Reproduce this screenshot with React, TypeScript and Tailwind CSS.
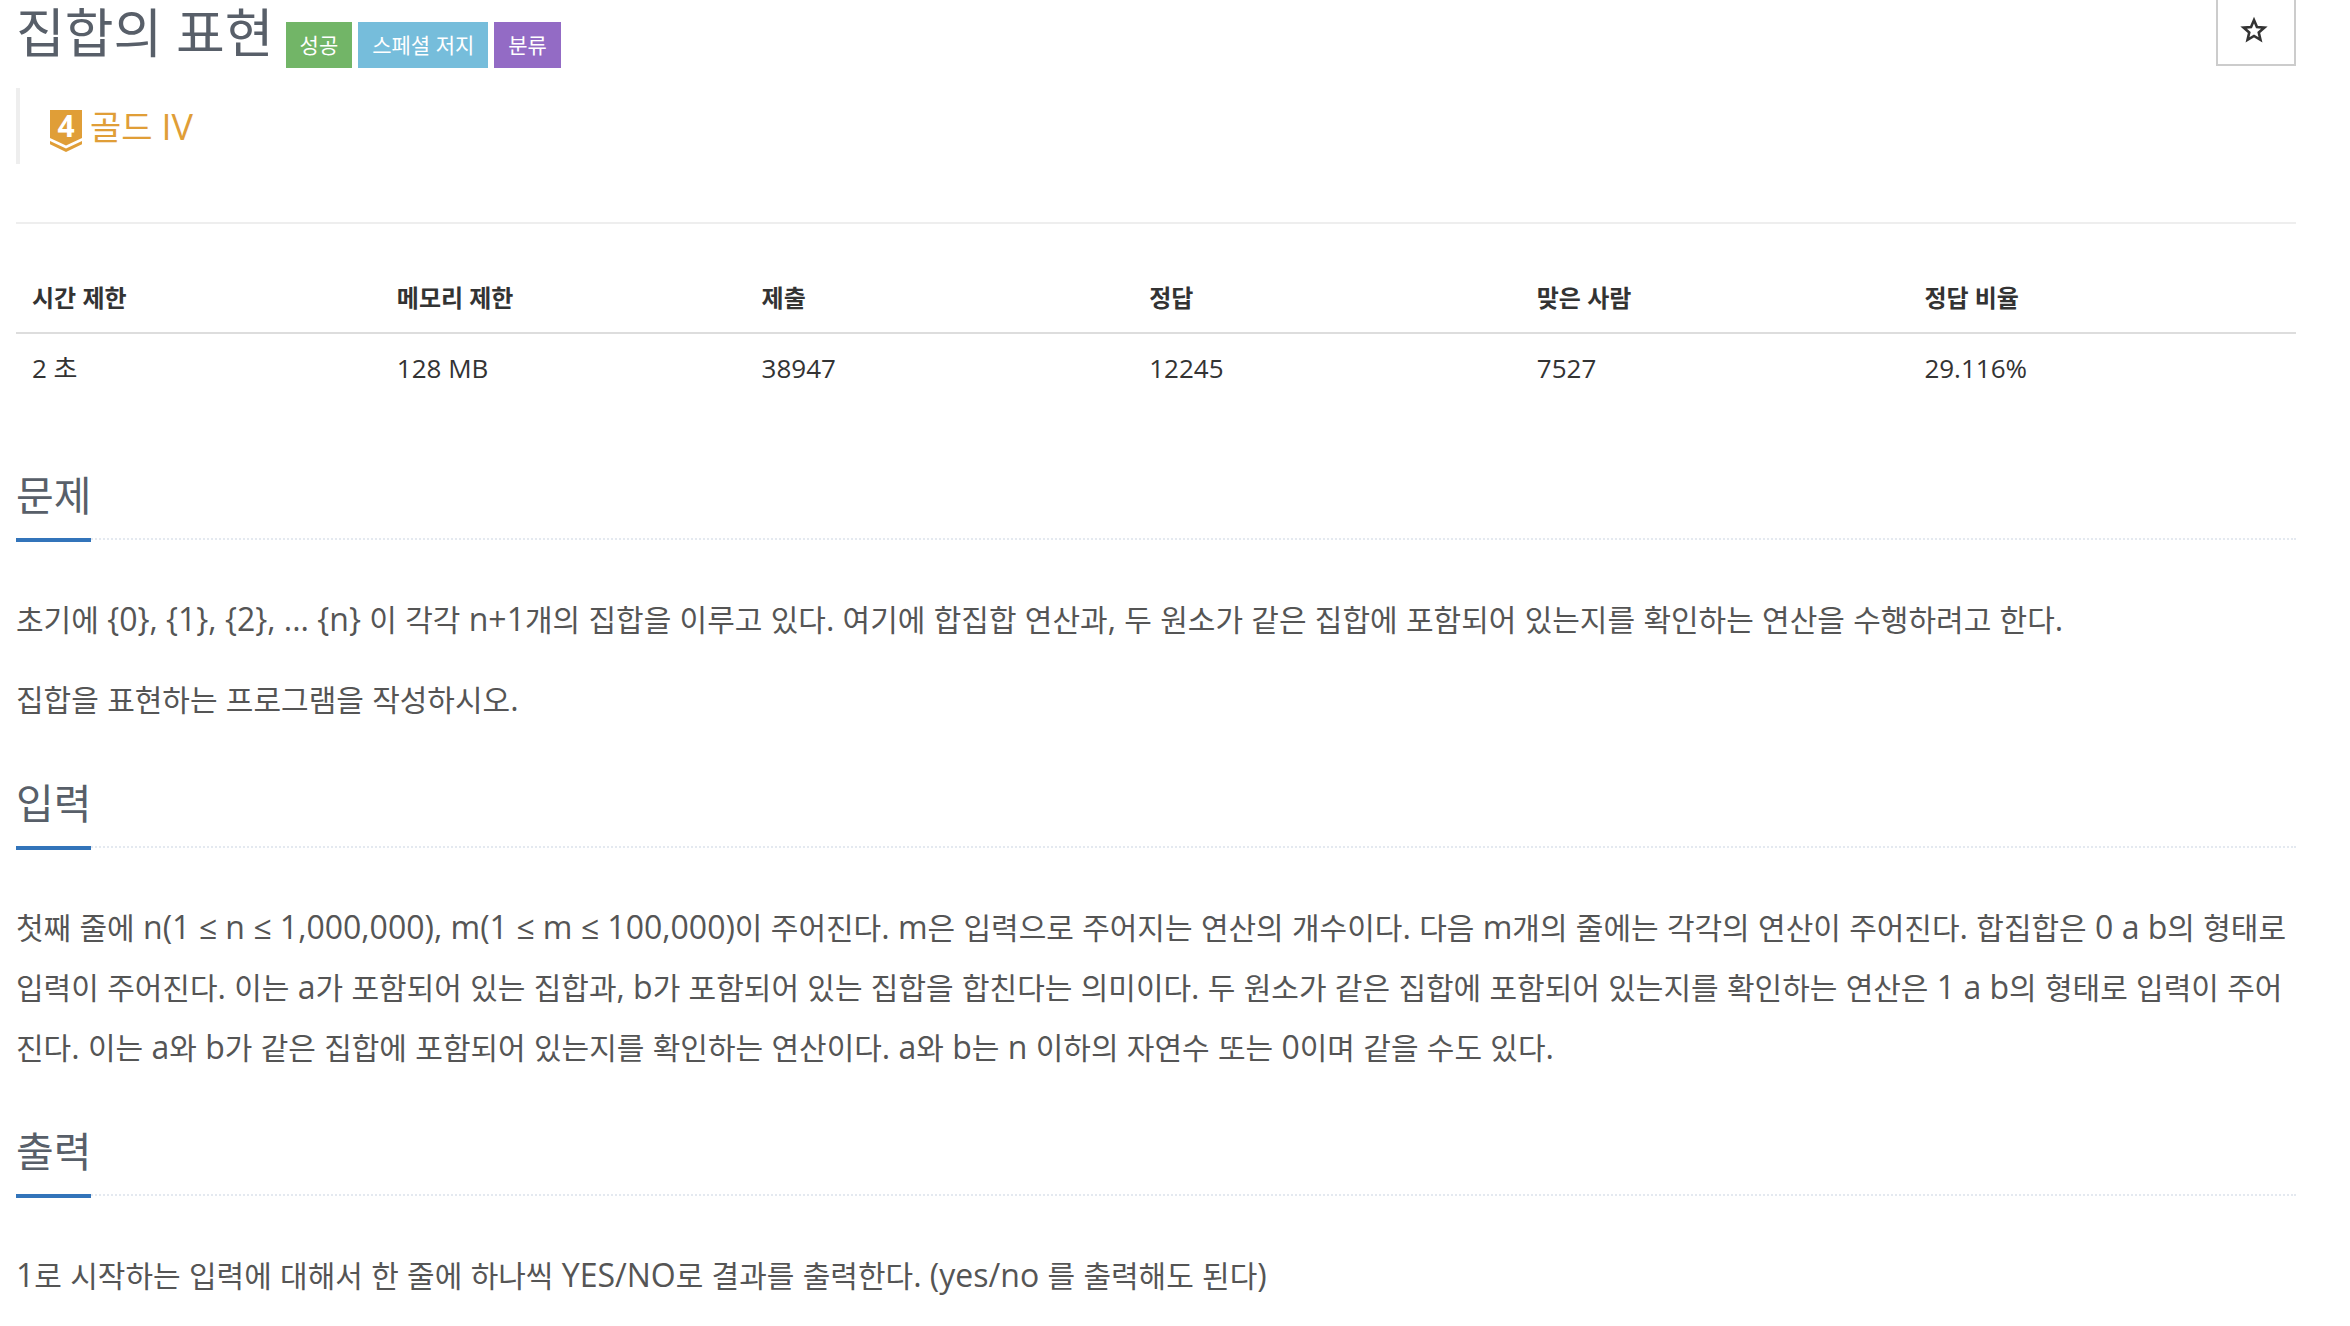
import type { ReactNode } from "react";

const stats = [
  { label: "시간 제한", value: "2 초", width: "w-[16%]" },
  { label: "메모리 제한", value: "128 MB", width: "w-[16%]" },
  { label: "제출", value: "38947", width: "w-[17%]" },
  { label: "정답", value: "12245", width: "w-[17%]" },
  { label: "맞은 사람", value: "7527", width: "w-[17%]" },
  { label: "정답 비율", value: "29.116%", width: "w-[17%]" },
];

const sections = [
  {
    title: "문제",
    paragraphs: [
      "초기에 {0}, {1}, {2}, ... {n} 이 각각 n+1개의 집합을 이루고 있다. 여기에 합집합 연산과, 두 원소가 같은 집합에 포함되어 있는지를 확인하는 연산을 수행하려고 한다.",
      "집합을 표현하는 프로그램을 작성하시오.",
    ],
  },
  {
    title: "입력",
    paragraphs: [
      "첫째 줄에 n(1 ≤ n ≤ 1,000,000), m(1 ≤ m ≤ 100,000)이 주어진다. m은 입력으로 주어지는 연산의 개수이다. 다음 m개의 줄에는 각각의 연산이 주어진다. 합집합은 0 a b의 형태로 입력이 주어진다. 이는 a가 포함되어 있는 집합과, b가 포함되어 있는 집합을 합친다는 의미이다. 두 원소가 같은 집합에 포함되어 있는지를 확인하는 연산은 1 a b의 형태로 입력이 주어진다. 이는 a와 b가 같은 집합에 포함되어 있는지를 확인하는 연산이다. a와 b는 n 이하의 자연수 또는 0이며 같을 수도 있다.",
    ],
  },
  {
    title: "출력",
    paragraphs: [
      "1로 시작하는 입력에 대해서 한 줄에 하나씩 YES/NO로 결과를 출력한다. (yes/no 를 출력해도 된다)",
    ],
  },
];

// Latin runs are set one step larger than the Hangul around them
function Paragraph({ text }: { text: string }) {
  const parts = text.split(/([ -~≤]+)/);
  return (
    <p className="text-[30px] leading-[60px] text-[#555]">
      {parts.map((part, index) =>
        index % 2 === 1 ? (
          <span key={index} className="text-[32px] leading-none">
            {part}
          </span>
        ) : (
          part
        )
      )}
    </p>
  );
}

function Label({ color, children }: { color: string; children: ReactNode }) {
  return (
    <span className={`${color} px-[14px] text-[21px] leading-[46px] text-white`}>
      {children}
    </span>
  );
}

function TierBadge() {
  return (
    <svg className="h-[42px] w-8 overflow-visible" viewBox="0 0 32 42" aria-label="골드 4">
      <path d="M0 0H32V28L16 35.500L0 28Z" fill="#e09e37" />
      <path d="M0 31L16 38.500L32 31V34.300L16 42L0 34.300Z" fill="#e09e37" />
      <text
        x="16"
        y="27"
        textAnchor="middle"
        fill="#fff"
        className="font-['Open_Sans'] text-[30px] font-bold"
      >
        4
      </text>
    </svg>
  );
}

function Section({ title, children }: { title: string; children: ReactNode }) {
  return (
    <section>
      <div className="mb-[50px] border-b-2 border-dotted border-[#e4e9f0]">
        <h2 className="-mb-1 inline-block border-b-4 border-[#3274ba] pb-[10px] align-top text-[41px] leading-[66px] text-[#585f69]">
          {title}
        </h2>
      </div>
      <div className="space-y-5">{children}</div>
    </section>
  );
}

export default function App() {
  return (
    <main className="bg-white pl-4 pr-[54px] font-['Open_Sans','Noto_Sans_CJK_KR',sans-serif] text-[#333]">
      <header className="flex h-[68px] items-start justify-between">
        <div className="flex items-start">
          <h1 className="text-[53px] leading-[66px] text-[#585f69]">집합의 표현</h1>
          <div className="ml-3 mt-[22px] flex gap-[6px]">
            <Label color="bg-[#72b567]">성공</Label>
            <Label color="bg-[#76bddb]">스페셜 저지</Label>
            <Label color="bg-[#936bc5]">분류</Label>
          </div>
        </div>
        <button
          type="button"
          aria-label="즐겨찾기"
          className="flex h-[66px] w-20 items-center justify-center border-2 border-t-0 border-[#ccc] pb-1 pr-1"
        >
          <svg className="h-7 w-7" viewBox="0 0 28 28" fill="none" stroke="#333" strokeWidth="2.6">
            <path d="M14 4L16.940 10.950L24.460 11.600L18.760 16.550L20.470 23.900L14 20L7.530 23.900L9.240 16.550L3.540 11.600L11.060 10.950Z" />
          </svg>
        </button>
      </header>

      {/* Tier */}
      <blockquote className="mt-5 flex h-[76px] items-start border-l-4 border-[#eee] pl-[30px] pt-[22px] text-[#e09e37]">
        <TierBadge />
        <span className="ml-2 text-[34px] leading-[34px]">
          골드 <span className="text-[36px]">IV</span>
        </span>
      </blockquote>

      <hr className="mt-[58px] border-t-2 border-[#eee]" />

      <table className="mt-10 w-full table-fixed text-left">
        <thead>
          <tr className="border-b-2 border-[#ddd]">
            {stats.map((stat) => (
              <th key={stat.label} scope="col" className={`${stat.width} px-4 py-4 text-2xl leading-9 font-bold`}>
                {stat.label}
              </th>
            ))}
          </tr>
        </thead>
        <tbody>
          <tr>
            {stats.map((stat) => (
              <td key={stat.label} className="px-4 py-4 text-[26px] leading-9">
                {stat.value}
              </td>
            ))}
          </tr>
        </tbody>
      </table>

      <div className="mt-[60px] space-y-10">
        {sections.map((section) => (
          <Section key={section.title} title={section.title}>
            {section.paragraphs.map((text) => (
              <Paragraph key={text} text={text} />
            ))}
          </Section>
        ))}
      </div>
    </main>
  );
}
